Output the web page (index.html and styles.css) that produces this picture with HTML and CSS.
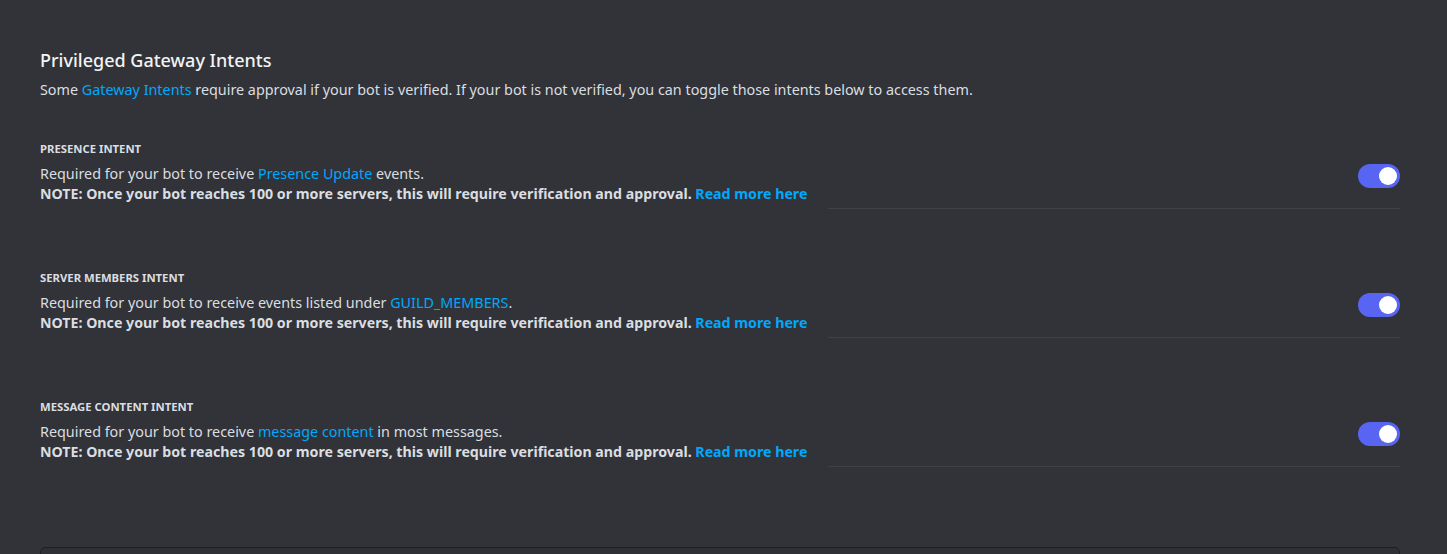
FILE: index.html
```html
<!DOCTYPE html>
<html>
<head>
<meta charset="utf-8">
<link rel="stylesheet" href="styles.css">
</head>
<body>
<main class="page">
  <section class="intents">
    <h2 class="title">Privileged Gateway Intents</h2>
    <p class="desc">Some <a class="link">Gateway Intents</a> require approval if your bot is verified. If your bot is not verified, you can toggle those intents below to access them.</p>

    <div class="intent">
      <div class="intent-text">
        <div class="label">PRESENCE INTENT</div>
        <p class="body">Required for your bot to receive <a class="link">Presence Update</a> events.<br>
        <strong class="note">NOTE: Once your bot reaches 100 or more servers, this will require verification and approval. <a class="link">Read more here</a></strong></p>
      </div>
      <div class="intent-side">
        <span class="toggle"><span class="knob"></span></span>
      </div>
    </div>

    <div class="intent">
      <div class="intent-text">
        <div class="label">SERVER MEMBERS INTENT</div>
        <p class="body">Required for your bot to receive events listed under <a class="link">GUILD_MEMBERS</a>.<br>
        <strong class="note">NOTE: Once your bot reaches 100 or more servers, this will require verification and approval. <a class="link">Read more here</a></strong></p>
      </div>
      <div class="intent-side">
        <span class="toggle"><span class="knob"></span></span>
      </div>
    </div>

    <div class="intent">
      <div class="intent-text">
        <div class="label">MESSAGE CONTENT INTENT</div>
        <p class="body">Required for your bot to receive <a class="link">message content</a> in most messages.<br>
        <strong class="note">NOTE: Once your bot reaches 100 or more servers, this will require verification and approval. <a class="link">Read more here</a></strong></p>
      </div>
      <div class="intent-side">
        <span class="toggle"><span class="knob"></span></span>
      </div>
    </div>

    <div class="panel"></div>
  </section>
</main>
</body>
</html>
```

FILE: styles.css
```css
html, body {
  margin: 0;
  padding: 0;
  background: #313338;
  height: 100%;
  overflow: hidden;
}
body {
  font-family: "Noto Sans", "Open Sans", sans-serif;
  color: #dbdee1;
}
.page {
  padding: 48px 47px 0 40px;
}
.title {
  margin: 0;
  font-size: 18px;
  line-height: 24px;
  font-weight: 500;
  color: #f2f3f5;
}
.desc {
  margin: 8px 0 0;
  font-size: 14.35px;
  line-height: 20px;
  color: #dbdee1;
}
.link {
  color: #00a8fc;
  text-decoration: none;
}
.intent {
  display: flex;
  margin-top: 41px;
}
.intent + .intent {
  margin-top: 61px;
}
.intent-text {
  flex: none;
  padding-bottom: 5px;
}
.label {
  font-size: 11.3px;
  line-height: 16px;
  font-weight: 700;
  color: #dbdee1;
  margin-bottom: 7px;
}
.body {
  margin: 0;
  font-size: 14.35px;
  line-height: 20px;
}
.note {
  font-size: 14.2px;
  font-weight: 700;
  color: #dbdee1;
}
.intent-side {
  flex: 1;
  margin-left: 21px;
  border-bottom: 1px solid #3f4147;
  display: flex;
  justify-content: flex-end;
  align-items: flex-start;
  padding-top: 23px;
}
.toggle {
  width: 42px;
  height: 24px;
  border-radius: 12px;
  background: #5865f2;
  position: relative;
}
.knob {
  position: absolute;
  top: 3px;
  right: 3px;
  width: 18px;
  height: 18px;
  border-radius: 50%;
  background: #ffffff;
}
.panel {
  margin-top: 80px;
  height: 40px;
  border: 1px solid #1e1f22;
  border-radius: 5px;
  background: #2e3035;
}
```
